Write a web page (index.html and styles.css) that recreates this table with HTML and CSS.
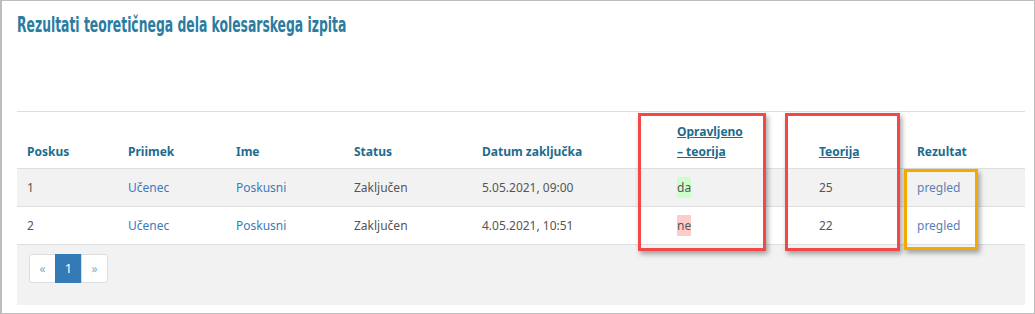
FILE: index.html
```html
<!DOCTYPE html>
<html>
<head>
<meta charset="utf-8">
<link rel="stylesheet" href="styles.css">
</head>
<body>
<div class="frame">
  <h1 class="title"><span class="title-text">Rezultati teoretičnega dela kolesarskega izpita</span></h1>
  <div class="grid-wrap">
    <table class="results">
      <colgroup>
        <col class="c1"><col class="c2"><col class="c3"><col class="c4"><col class="c5"><col class="c6"><col class="c7"><col class="c8">
      </colgroup>
      <thead>
        <tr>
          <th>Poskus</th>
          <th>Priimek</th>
          <th>Ime</th>
          <th>Status</th>
          <th>Datum zaključka</th>
          <th class="sort"><a href="#">Opravljeno<br>– teorija</a></th>
          <th class="sort"><a href="#">Teorija</a></th>
          <th>Rezultat</th>
        </tr>
      </thead>
      <tbody>
        <tr class="odd">
          <td>1</td>
          <td><a href="#">Učenec</a></td>
          <td><a href="#">Poskusni</a></td>
          <td>Zaključen</td>
          <td>5.05.2021, 09:00</td>
          <td><span class="yes">da</span></td>
          <td>25</td>
          <td><a href="#" class="rev">pregled</a></td>
        </tr>
        <tr>
          <td>2</td>
          <td><a href="#">Učenec</a></td>
          <td><a href="#">Poskusni</a></td>
          <td>Zaključen</td>
          <td>4.05.2021, 10:51</td>
          <td><span class="no">ne</span></td>
          <td>22</td>
          <td><a href="#" class="rev">pregled</a></td>
        </tr>
      </tbody>
    </table>
    <div class="footer">
      <ul class="pager">
        <li><span class="pg">«</span></li>
        <li><span class="pg active">1</span></li>
        <li><span class="pg">»</span></li>
      </ul>
    </div>
    <div class="mark red m1"></div>
    <div class="mark red m2"></div>
    <div class="mark orange m3"></div>
  </div>
</div>
</body>
</html>
```

FILE: styles.css
```css
html, body {
  margin: 0;
  padding: 0;
  background: #fff;
}
.frame {
  box-sizing: border-box;
  width: 1035px;
  height: 314px;
  border: 1px solid #bdbdbd;
  border-left-width: 2px;
  padding: 0 9px 0 15px;
  font-family: "Noto Sans", "Open Sans", sans-serif;
  font-size: 12px;
  color: #555;
}
.title {
  margin: 11px 0 0 0;
  height: 26px;
  line-height: 26px;
  font-family: "DejaVu Sans Condensed", "DejaVu Sans", sans-serif;
  font-weight: bold;
  font-size: 21px;
  color: #2b7ca0;
  white-space: nowrap;
}
.title-text {
  display: inline-block;
  transform: scaleX(0.655);
  transform-origin: left center;
}
.grid-wrap {
  position: relative;
  margin-top: 73px;
  border-top: 1px solid #dedede;
}
.results {
  width: 100%;
  border-collapse: collapse;
  table-layout: fixed;
}
.c1 { width: 101px; }
.c2 { width: 108px; }
.c3 { width: 118px; }
.c4 { width: 128px; }
.c5 { width: 195px; }
.c6 { width: 142px; }
.c7 { width: 98px; }
.c8 { width: auto; }
.results th {
  height: 56px;
  box-sizing: border-box;
  padding: 0 10px 6px 10px;
  text-align: left;
  vertical-align: bottom;
  font-weight: bold;
  color: #1d6c8e;
  line-height: 20px;
  border-bottom: 1px solid #dedede;
}
.results th.sort a {
  color: #1d6c8e;
  text-decoration: underline;
}
.results td {
  height: 38px;
  box-sizing: border-box;
  padding: 2px 10px 0 10px;
  border-bottom: 1px solid #dedede;
  vertical-align: middle;
  line-height: 18px;
}
.results tr.odd td { background: #f2f2f2; }
.results td a {
  color: #3a7bb8;
  text-decoration: none;
}
.results td a.rev { color: #5b7fb5; }
.yes {
  background: #ccffcc;
  padding: 2px 0;
}
.no {
  background: #ffcccc;
  padding: 2px 0;
}
.footer {
  background: #f2f2f2;
  height: 60px;
  padding-top: 9px;
  box-sizing: border-box;
}
.pager {
  list-style: none;
  margin: 0 0 0 12px;
  padding: 0;
  display: flex;
}
.pg {
  display: flex;
  align-items: center;
  justify-content: center;
  width: 27px;
  height: 29px;
  box-sizing: border-box;
  background: #fff;
  border: 1px solid #ddd;
  color: #8aa9c9;
  font-size: 12px;
  margin-left: -1px;
}
.pager li:first-child .pg { border-radius: 3px 0 0 3px; margin-left: 0; }
.pager li:last-child .pg { border-radius: 0 3px 3px 0; }
.pg.active {
  background: #337ab7;
  border-color: #337ab7;
  color: #fff;
  font-size: 13px;
}
.mark {
  position: absolute;
  box-sizing: border-box;
  border: 3px solid #f44747;
  box-shadow: 2px 3px 5px rgba(0,0,0,0.35);
}
.mark.orange { border-color: #f5a900; }
.m1 { left: 621px; top: 1px; width: 128px; height: 138px; }
.m2 { left: 768px; top: 1px; width: 115px; height: 138px; }
.m3 { left: 887px; top: 57px; width: 74px; height: 81px; }
```
